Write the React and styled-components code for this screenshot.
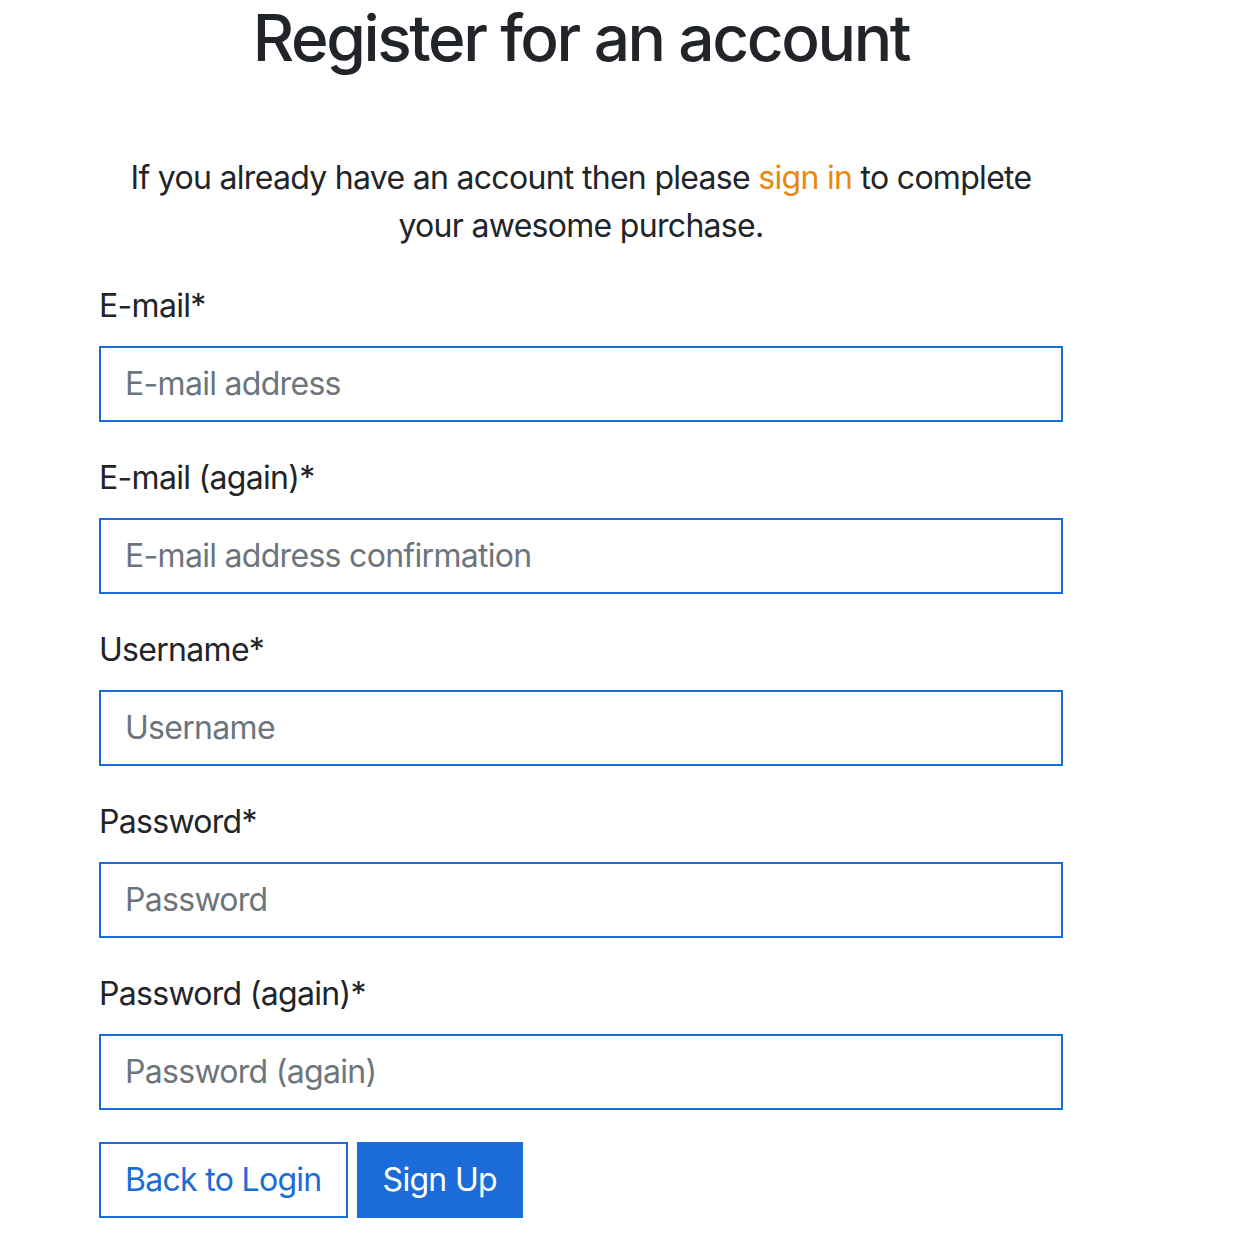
import React from 'react'
import styled, {createGlobalStyle} from 'styled-components'

const GlobalStyle = createGlobalStyle`
    html, body {
        margin: 0;
        padding: 0;
        background: #fff;
    }
    body {
        font-family: Inter, "Noto Sans", "Liberation Sans", sans-serif;
        color: #212529;
        font-size: 32px;
        line-height: 1.5;
        letter-spacing: -0.7px;
    }
`

const BLUE = '#1b6bd8'

const Page = styled.div`
    padding: 0 0 40px 99px;
    width: 964px;
`

const Title = styled.h1`
    margin: 0 0 77px;
    font-size: 64px;
    font-weight: 500;
    line-height: 1.2;
    text-align: center;
    letter-spacing: -2.4px;
`

const Intro = styled.p`
    margin: 0 10px 32px;
    text-align: center;
    a {
        color: #e8890f;
        text-decoration: none;
    }
`

const Field = styled.div`
    margin-bottom: 32px;
`

const Label = styled.label`
    display: block;
    margin-bottom: 16px;
`

const Input = styled.input`
    display: block;
    box-sizing: border-box;
    width: 100%;
    height: 76px;
    padding: 12px 24px;
    border: 2px solid ${BLUE};
    border-radius: 0;
    font: inherit;
    letter-spacing: inherit;
    color: #212529;
    outline: none;
    &::placeholder {
        color: #6c757d;
    }
`

const Actions = styled.div`
    display: flex;
    gap: 9px;
`

const Button = styled.button`
    box-sizing: border-box;
    height: 76px;
    padding: 12px 24px;
    border: 2px solid ${BLUE};
    border-radius: 0;
    font: inherit;
    letter-spacing: inherit;
    background: ${props => props.primary ? BLUE : '#fff'};
    color: ${props => props.primary ? '#fff' : BLUE};
    cursor: pointer;
`

const fields = [
    {label: 'E-mail*', placeholder: 'E-mail address', type: 'email'},
    {label: 'E-mail (again)*', placeholder: 'E-mail address confirmation', type: 'email'},
    {label: 'Username*', placeholder: 'Username', type: 'text'},
    {label: 'Password*', placeholder: 'Password', type: 'password'},
    {label: 'Password (again)*', placeholder: 'Password (again)', type: 'password'},
]

const App = () => (
    <Page>
        <GlobalStyle/>
        <Title>Register for an account</Title>
        <Intro>
            If you already have an account then please <a href="#">sign in</a> to complete your awesome purchase.
        </Intro>
        <form onSubmit={e => e.preventDefault()}>
            {fields.map(f => (
                <Field key={f.label}>
                    <Label>{f.label}</Label>
                    <Input type={f.type} placeholder={f.placeholder}/>
                </Field>
            ))}
            <Actions>
                <Button type="button">Back to Login</Button>
                <Button primary type="submit">Sign Up</Button>
            </Actions>
        </form>
    </Page>
)

export default App
